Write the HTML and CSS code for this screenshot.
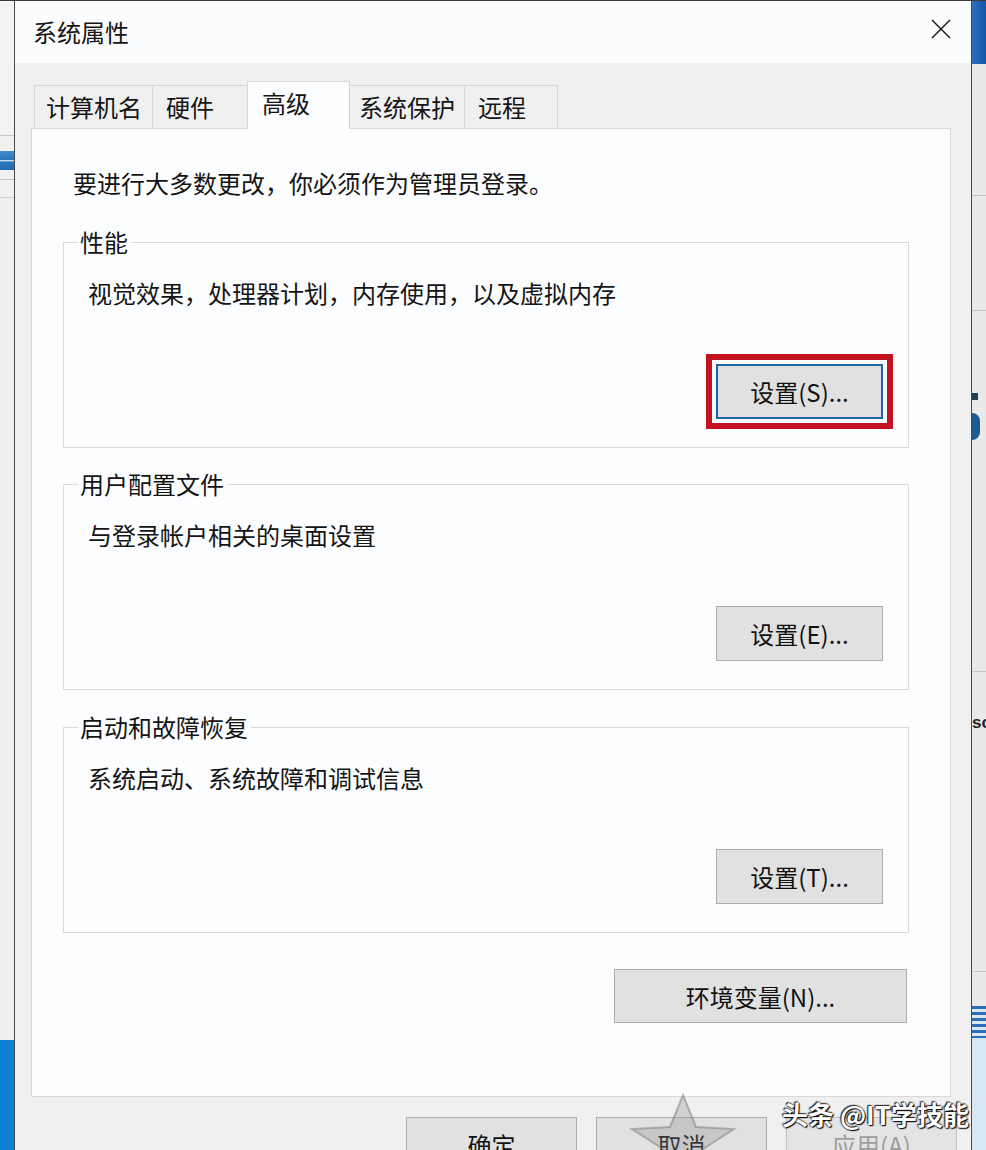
FILE: index.html
```html
<!DOCTYPE html>
<html lang="zh-CN">
<head>
<meta charset="utf-8">
<title>系统属性</title>
<link rel="stylesheet" href="styles.css">
</head>
<body>
<div class="screen">
  <div class="side side-left">
    <div class="sl-top"></div>
    <div class="sl-check"></div>
    <div class="sl-line1"></div>
    <div class="sl-line2"></div>
    <div class="sl-fill"></div>
    <div class="sl-blue"></div>
  </div>

  <div class="dialog">
    <div class="titlebar">
      <span class="title">系统属性</span>
      <svg class="close" width="20" height="20" viewBox="0 0 20 20"><path d="M1 1 L19 19 M19 1 L1 19" stroke="#1a1a1a" stroke-width="1.5" fill="none"/></svg>
    </div>
    <div class="dlg-body">
      <div class="tabs">
        <div class="tab tab-1">计算机名</div>
        <div class="tab tab-2">硬件</div>
        <div class="tab tab-3 tab-active">高级</div>
        <div class="tab tab-4">系统保护</div>
        <div class="tab tab-5">远程</div>
      </div>
      <div class="panel">
        <p class="intro">要进行大多数更改，你必须作为管理员登录。</p>

        <fieldset class="group group-first">
          <legend class="legend">性能</legend>
          <p class="desc">视觉效果，处理器计划，内存使用，以及虚拟内存</p>
          <div class="btn-row"><button class="btn btn-set btn-focus">设置(S)...</button></div>
        </fieldset>

        <fieldset class="group">
          <legend class="legend">用户配置文件</legend>
          <p class="desc">与登录帐户相关的桌面设置</p>
          <div class="btn-row"><button class="btn btn-set">设置(E)...</button></div>
        </fieldset>

        <fieldset class="group group-last">
          <legend class="legend">启动和故障恢复</legend>
          <p class="desc">系统启动、系统故障和调试信息</p>
          <div class="btn-row"><button class="btn btn-set">设置(T)...</button></div>
        </fieldset>

        <div class="env-row"><button class="btn btn-env">环境变量(N)...</button></div>
      </div>
      <div class="actions">
        <button class="btn btn-act">确定</button>
        <button class="btn btn-act">取消</button>
        <button class="btn btn-act btn-disabled">应用(A)</button>
      </div>
    </div>
  </div>

  <div class="side side-right">
    <div class="rs-blue"></div>
    <div class="rs-seg1"></div>
    <div class="rs-seg2"></div>
    <div class="rs-seg3"></div>
    <div class="rs-dot"></div>
    <div class="rs-blob"></div>
    <div class="rs-seg4"></div>
    <div class="rs-seg5"></div>
    <div class="rs-text">sc</div>
    <div class="rs-seg6"></div>
    <div class="rs-seg7"></div>
    <div class="rs-icon"></div>
    <div class="rs-rest"></div>
  </div>

  <svg class="wm-star" width="110" height="70" viewBox="0 0 110 70"><polygon points="55,2 68,34 106,36 75,56 86,78 55,64 24,78 35,56 4,36 42,34" fill="rgba(140,140,140,0.30)" stroke="rgba(110,110,110,0.45)" stroke-width="2"/></svg>
  <div class="wm">头条 @IT学技能</div>
</div>
</body>
</html>
```

FILE: styles.css
```css
* { box-sizing: border-box; }
html, body { margin: 0; padding: 0; }
body {
  font-family: "Noto Sans CJK SC", "Microsoft YaHei", "Noto Sans", sans-serif;
  color: #141414;
  background: #eeeeee;
}
.screen {
  position: relative;
  display: flex;
  width: 986px;
  height: 1150px;
  overflow: hidden;
  border-top: 1px solid #3a3a3a;
}

/* desktop strips */
.side { width: 14px; display: flex; flex-direction: column; flex-shrink: 0; }
.side-left { background: #f1f1f1; }
.sl-top { height: 135px; border-bottom: 1px solid #c9c9c9; background: #f3f3f3; }
.sl-check { margin-top: 15px; height: 19px; background: linear-gradient(180deg, #3f8fd0 0%, #2b79bd 45%, #c9e2f5 50%, #2b79bd 58%, #1f6cb0 100%); }
.sl-line1 { height: 10px; border-bottom: 1px solid #c6c6c6; }
.sl-line2 { height: 18px; border-bottom: 1px solid #d2d2d2; }
.sl-fill { flex: 1; background: #efefef; }
.sl-blue { height: 110px; background: #0c80d4; }

.side-right { background: #e9e9e9; }
.rs-blue { height: 63px; background: linear-gradient(90deg, #2d6fbd, #1456a6); flex-shrink: 0; }
.rs-seg1 { height: 132px; border-bottom: 1px solid #c4c4c4; flex-shrink: 0; }
.rs-seg2 { height: 115px; border-bottom: 1px solid #c4c4c4; flex-shrink: 0; }
.rs-seg3 { height: 82px; flex-shrink: 0; }
.rs-dot { width: 6px; height: 7px; background: #203c57; flex-shrink: 0; }
.rs-blob { margin-top: 13px; width: 8px; height: 27px; background: #1e5b8c; border-radius: 0 14px 14px 0; flex-shrink: 0; }
.rs-seg4 { height: 232px; border-bottom: 1px solid #c8c8c8; flex-shrink: 0; }
.rs-seg5 { height: 40px; flex-shrink: 0; }
.rs-text { height: 22px; font-family: "Liberation Sans", sans-serif; font-weight: bold; font-size: 17px; line-height: 22px; color: #222; flex-shrink: 0; }
.rs-seg6 { height: 238px; border-bottom: 1px solid #c8c8c8; flex-shrink: 0; }
.rs-seg7 { height: 34px; flex-shrink: 0; }
.rs-icon { height: 32px; background: repeating-linear-gradient(180deg, #2a6fb8 0 3px, #dbe8f4 3px 6px); flex-shrink: 0; }
.rs-rest { flex: 1; background: #d8e6f3; }

/* dialog */
.dialog {
  width: 958px;
  flex-shrink: 0;
  display: flex;
  flex-direction: column;
  background: #f0f0f0;
  border-left: 1px solid #4a4a4a;
  border-right: 1px solid #4a4a4a;
}
.titlebar {
  height: 62px;
  flex-shrink: 0;
  background: #fbfcfd;
  display: flex;
  align-items: center;
  justify-content: space-between;
  padding: 0 20px 0 18px;
}
.title { font-size: 24px; line-height: 30px; color: #151515; }
.close { margin-bottom: 6px; }

.dlg-body { flex: 1; padding: 18px 0 0 16px; }

.tabs { display: flex; align-items: flex-end; height: 47px; margin-left: 3px; }
.tab {
  height: 43px;
  border: 1px solid #d6d6d6;
  border-bottom: none;
  margin-right: -1px;
  font-size: 24px;
  line-height: 42px;
  background: #f0f0f0;
  white-space: nowrap;
}
.tab-1 { width: 119px; padding-left: 11px; }
.tab-2 { width: 96px; padding-left: 13px; }
.tab-3 { width: 103px; padding-left: 14px; }
.tab-4 { width: 116px; padding-left: 9px; }
.tab-5 { width: 94px; padding-left: 13px; }
.tab-active {
  height: 48px;
  margin-bottom: -1px;
  background: #fcfdfe;
  position: relative;
  z-index: 1;
}

.panel {
  width: 920px;
  height: 969px;
  border: 1px solid #d9d9d9;
  background: #fcfdfe;
  padding: 39px 0 0 31px;
}
.intro { margin: 0 0 0 10px; font-size: 24px; line-height: 30px; }

.group {
  width: 846px;
  min-width: 0;
  margin: 21px 0 0 0;
  padding: 0;
  border: 1px solid #dadada;
}
.group-first { margin-top: 29px; }
.group-last { margin-top: 22px; }
.legend {
  margin-left: 14px;
  padding: 0 3px 0 2px;
  font-size: 24px;
  line-height: 30px;
}
.desc { margin: 21px 0 0 24px; font-size: 24px; line-height: 30px; }
.btn-row {
  display: flex;
  justify-content: flex-end;
  margin-top: 56px;
  padding: 0 25px 28px 0;
}

.btn {
  display: flex;
  align-items: center;
  justify-content: center;
  padding: 0;
  margin: 0;
  font-family: inherit;
  font-size: 24px;
  color: #111;
  background: #e1e1e1;
  border: 1px solid #adadad;
  border-radius: 0;
}
.btn-set { width: 167px; height: 55px; }
.btn-focus {
  border: 2px solid #1f64a8;
  outline: 6px solid #c3121f;
  outline-offset: 4px;
}

.env-row {
  width: 846px;
  display: flex;
  justify-content: flex-end;
  padding-right: 2px;
  margin-top: 36px;
}
.btn-env { width: 293px; height: 54px; }

.actions {
  display: flex;
  justify-content: flex-end;
  gap: 19px;
  padding-right: 14px;
  margin-top: 20px;
}
.btn-act { width: 171px; height: 54px; }
.btn-disabled { color: #9d9d9d; background: #e4e4e4; border-color: #c2c2c2; }

/* watermark overlay */
.wm-star { position: absolute; left: 628px; top: 1092px; }
.wm {
  position: absolute;
  left: 782px;
  top: 1096px;
  font-size: 26px;
  font-weight: bold;
  line-height: 34px;
  color: #ffffff;
  white-space: nowrap;
  text-shadow: 0 0 2px #000, 1px 1px 1px #000, -1px -1px 1px #333;
}
```
